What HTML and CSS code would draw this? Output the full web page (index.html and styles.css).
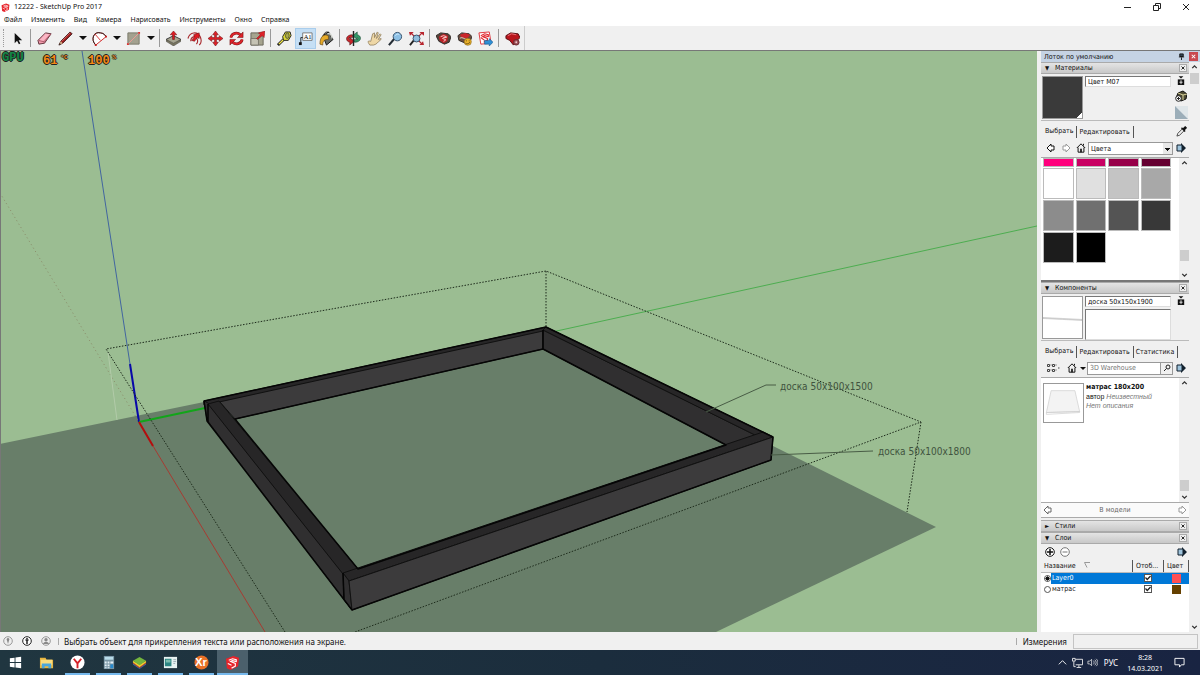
FILE: index.html
```
<!DOCTYPE html>
<html lang="ru">

<head>
  <meta charset="UTF-8">
  <meta name="viewport" content="width=device-width, initial-scale=1.0">
  <title>12222 - SketchUp Pro 2017</title>
  <link rel="stylesheet" href="styles.css">
</head>

<body>
  <!-- shared icons -->
  <svg class="defs" aria-hidden="true">
    <symbol id="left" viewBox="0 0 10 10"><path d="M1 5 5 1v2h3v4H5v2z" fill="#fff" stroke="currentColor"/></symbol>
    <symbol id="right" viewBox="0 0 10 10"><path d="M9 5 5 1v2H2v4h3v2z" fill="#fff" stroke="currentColor"/></symbol>
    <symbol id="home" viewBox="0 0 12 12"><path d="M1 6 6 1l5 5M2.500 5.500V11h7V5.500M9 3V1" fill="none" stroke="#111" stroke-width="1.200"/><path d="M5 7h2v4H5z" fill="#111"/></symbol>
    <symbol id="details" viewBox="0 0 10 10"><path d="M1 2h5v6H1z" fill="#9fc4dc" stroke="#12212e"/><path d="M5 0l5 5-5 5V8h1V2H5z" fill="#12212e"/></symbol>
    <symbol id="secondary" viewBox="0 0 10 12"><path d="M2 0h6L5 3z" fill="#111"/><path d="M1 4h8v7H1z" fill="#111"/><path d="M5 5v5M3 7.500h4" stroke="#fff"/></symbol>
    <symbol id="up" viewBox="0 0 8 8"><path d="M2 5 4 3l2 2" fill="none" stroke="#333" stroke-width="1.200"/></symbol>
    <symbol id="down" viewBox="0 0 8 8"><path d="m2 3 2 2 2-2" fill="none" stroke="#333" stroke-width="1.200"/></symbol>
    <symbol id="cross" viewBox="0 0 8 8"><path d="m2 2 4 4M6 2 2 6" stroke="currentColor" stroke-width="1.200"/></symbol>
    <symbol id="sketchup" viewBox="0 0 16 16"><path d="M1 4 9 1l6 2-1 9-8 4-4-2z" fill="#e8242b"/><path d="M4 5.500 8 4l4 1v2L8 6 6 7l5 2v3l-4 2M3 9l4 2" fill="none" stroke="#fff" stroke-width="1.200"/></symbol>
  </svg>

  <header class="titlebar">
    <svg class="logo"><use href="#sketchup"/></svg>
    <h1>12222 - SketchUp Pro 2017</h1>
    <div class="window-buttons">
      <button aria-label="Свернуть"><svg viewBox="0 0 10 10"><path d="M1 5.500h7" stroke="#222"/></svg></button>
      <button aria-label="Восстановить"><svg viewBox="0 0 10 10"><path d="M1.500 3.500h5v5h-5zM3.500 3V1.500h5v5H7" fill="none" stroke="#222"/></svg></button>
      <button aria-label="Закрыть"><svg viewBox="0 0 10 10"><path d="m2 2 6 6M8 2 2 8" stroke="#222"/></svg></button>
    </div>
  </header>

  <nav class="menu">
    <button>Файл</button>
    <button>Изменить</button>
    <button>Вид</button>
    <button>Камера</button>
    <button>Нарисовать</button>
    <button>Инструменты</button>
    <button>Окно</button>
    <button>Справка</button>
  </nav>

  <div class="toolbar" role="toolbar" aria-label="Инструменты">
    <span class="grip"></span>
    <button aria-label="Выбор"><svg viewBox="0 0 16 16"><path d="M5 2v11l2.500-2.500L9.500 14l1.500-.8-1.800-3.400H13z" fill="#111"/></svg></button>
    <span class="sep"></span>
    <button aria-label="Ластик"><svg viewBox="0 0 16 16"><path d="M1 10 9 2l6 1-7 10-6 1z" fill="#f29aac" stroke="#5c3038"/><path d="m1.500 10 6 1.500L15 3M7.500 11.500 8 13" fill="none" stroke="#a85868"/><path d="m9 3 4 .5-6 7-4-1z" fill="#fbb6c4"/></svg></button>
    <button aria-label="Линия"><svg viewBox="0 0 16 16"><path d="M1 15 3 11 13 1l2 2L5 13z" fill="#9f2020" stroke="#3f1515"/><path d="m1 15 2-4 2 2z" fill="#d8b48c"/><path d="M1 15l1-2 1 1z" fill="#111"/><path d="m4 11 9-9" stroke="#d76060"/></svg></button>
    <button class="caret" aria-label="Другие линии"></button>
    <button aria-label="Дуга"><svg viewBox="0 0 16 16"><path d="M4 15C-2 9 2 0 9 2c4 0 6 4 6 4z" fill="#fff" stroke="#c22"/><path d="M4 15C-2 9 2 0 9 2c4 0 6 4 6 4" fill="none" stroke="#222"/><path d="m3 3 6 7" stroke="#d33"/><path d="M3 14h2v2H3zM14 5h2v2h-2z" fill="#c22"/></svg></button>
    <button class="caret" aria-label="Другие дуги"></button>
    <button aria-label="Прямоугольник"><svg viewBox="0 0 16 16"><path d="M2 2h12v12H2z" fill="#a3a18f" stroke="#77776b"/><path d="M2 14 14 2" stroke="#f09b95"/><path d="M1 13h2v2H1zM13 1h2v2h-2z" fill="#d33"/></svg></button>
    <button class="caret" aria-label="Другие фигуры"></button>
    <span class="sep"></span>
    <button aria-label="Вдавить"><svg viewBox="0 0 16 16"><path d="m0 9 8-4 8 4-8 6z" fill="#a6a48f" stroke="#333"/><path d="m0 9 8 4 8-4v2l-8 5-8-5z" fill="#77745f" stroke="#444" stroke-width=".5"/><path d="M8 0 4.500 4H7v5h2V4h2.500z" fill="#e01a22" stroke="#6e1518" stroke-width=".6"/></svg></button>
    <button aria-label="Смещение"><svg viewBox="0 0 16 16"><path d="M1 8C3 1 11 0 14 6s-1 9-1 9M4 11c0-5 5-7 7-2 1 3-1 5-1 5" fill="none" stroke="#a92c30" stroke-width="1.200"/><path d="m5 10 3-4-1-2 6-2v6l-2-1-3 4z" fill="#e01a22" stroke="#6e1518" stroke-width=".6"/></svg></button>
    <button aria-label="Переместить"><svg viewBox="0 0 16 16"><path d="m8 0 3 4H9v3h3V5l4 3-4 3V9H9v3h2l-3 4-3-4h2V9H4v2L0 8l4-3v2h3V4H5z" fill="#df2027" stroke="#6e1518" stroke-width=".6"/></svg></button>
    <button aria-label="Повернуть"><svg viewBox="0 0 16 16"><path d="M2 7c1-5 7-6 10-3M14 9c-1 5-7 6-10 3" fill="none" stroke="#7c181b" stroke-width="3"/><path d="M2 7c1-5 7-6 10-3M14 9c-1 5-7 6-10 3" fill="none" stroke="#e0252b" stroke-width="2"/><path d="M15 1v6H9zM1 15V9h6z" fill="#df2027" stroke="#6e1518" stroke-width=".6"/></svg></button>
    <button aria-label="Масштаб"><svg viewBox="0 0 16 16"><path d="M1 2h13v13H1z" fill="#a6a48f" stroke="#66645a"/><path d="M1 8h8v7H1z" fill="#c5c3b4" stroke="#77756a"/><path d="m8 9-1-1 4-4-2-2 7-2-1 7-2-2z" fill="#df2027" stroke="#8c1d20" stroke-width=".6"/></svg></button>
    <span class="sep"></span>
    <button aria-label="Рулетка"><svg viewBox="0 0 16 16"><path d="M1 15 7 9" stroke="#222" stroke-width="3"/><path d="M2 14 7 9" stroke="#f5e94a" stroke-width="1.500"/><path d="M6 6 9 1h5l1 4-3 5H7z" fill="#dcd836" stroke="#222"/><ellipse cx="11" cy="5" rx="2" ry="3" fill="#a8a94c" stroke="#222" stroke-width=".6"/></svg></button>
    <button class="active" aria-label="Текст"><svg viewBox="0 0 16 16"><path d="M5 2h10v8H5z" fill="#fff" stroke="#777"/><path d="M5 7H3v6" fill="none" stroke="#222"/><path d="M1 12h3v3H1z" fill="#111"/><text x="6" y="9" class="tool-letters">A1</text></svg></button>
    <button aria-label="Заливка"><svg viewBox="0 0 16 16"><path d="m4 5 6-4 5 8-7 6z" fill="#676b66" stroke="#111"/><path d="M5 4c2-5 7-3 8 2" fill="none" stroke="#222"/><path d="M9 3c3-1 5 2 5 5" stroke="#d5d8d2" fill="none" stroke-width="1.500"/><path d="M10 5C6 3 1 5 1 14l3 1c0-5 2-6 6-6z" fill="#e6aa28" stroke="#654817" stroke-width=".7"/></svg></button>
    <span class="sep"></span>
    <button aria-label="Орбита"><svg viewBox="0 0 16 16"><path d="M7 4C-1 4-1 11 4 12v3l5-4-5-4v2C2 8 3 7 7 7z" fill="#c8262b" stroke="#4b1719" stroke-width=".6"/><path d="M9 12c8 0 8-7 3-8V1L7 5l5 4V7c2 1 1 2-3 2z" fill="#34996a" stroke="#16452f" stroke-width=".6"/><path d="M8 0v16" stroke="#222" stroke-width="1.500"/></svg></button>
    <button aria-label="Панорама"><svg viewBox="0 0 16 16"><path d="M3 15c-3-4-2-5 1-4l2-8 2-1v5l3-6 1 1-2 6 4-5 1 1-3 5 3-1v1c-4 3-4 5-8 6z" fill="#eed7a6" stroke="#8b7958" stroke-width=".8"/></svg></button>
    <button aria-label="Лупа"><svg viewBox="0 0 16 16"><path d="m1 15 6-7" stroke="#252d35" stroke-width="2.200"/><circle cx="10" cy="6" r="4.500" fill="#8cc0e5" stroke="#314d67"/><path d="M8 5c1-2 3-2 4-1" stroke="#d8efff" fill="none"/></svg></button>
    <button aria-label="В размер окна"><svg viewBox="0 0 16 16"><path d="M1 15 6 9" stroke="#222" stroke-width="2"/><path d="m2 2 4 4m8-4-4 4m4 8-4-4" stroke="#b32530" stroke-width="1.500"/><path d="M0 1h5L1 5zM16 1v4l-5-4zM16 15h-5l4-4z" fill="#b8262f"/><circle cx="8" cy="8" r="3.700" fill="#91bede" stroke="#344e65"/></svg></button>
    <span class="sep"></span>
    <button aria-label="3D Warehouse"><svg viewBox="0 0 16 16"><path d="m0 5 5-3 8 1 3 3-2 6-5 2-6-3z" fill="#554238" stroke="#302b29"/><path d="m3 6 5-3 5 2-1 6-4 2-4-3z" fill="#bd2228"/><path d="m5 6 3-1 3 1v1L8 7 7 8l3 1v1l-2 1" fill="none" stroke="#f6d7d2"/></svg></button>
    <button aria-label="Поделиться моделью"><svg viewBox="0 0 16 16"><path d="m1 5 4-3 8 1 3 3-2 5-5 2-7-3z" fill="#6b4b3d" stroke="#302b29"/><path d="m3 4 6-2 5 2-3 4-6-1z" fill="#c9272b"/><path d="M3 8c2-2 4 0 7 1" stroke="#eee1d2" fill="none"/><circle cx="11.500" cy="11.500" r="3.800" fill="#edb42a" stroke="#815f13" stroke-width=".6"/><path d="M10 10v1m3-1v1m-4 2c1 1 3 1 5-1" stroke="#684b10" fill="none"/></svg></button>
    <button aria-label="LayOut"><svg viewBox="0 0 16 16"><path d="m1 2 11-1 2 12-11 1z" fill="#fff" stroke="#df3037"/><path d="m3 5 4-2 4 1v2L7 5 5 6l5 2v2l-4 2M3 7l4 3" fill="none" stroke="#e1272e" stroke-width="1.200"/><path d="M7 10h5V8l4 4-4 4v-2H7z" fill="#2e8fd5" stroke="#115286" stroke-width=".6"/></svg></button>
    <span class="sep"></span>
    <button aria-label="Extension Warehouse"><svg viewBox="0 0 16 16"><path d="m1 5 5-3 8 1 2 4-4 4-3 4-4-5-4-2z" fill="#b9161d" stroke="#571013"/><path d="m3 5 4-2 5 1" stroke="#ed747a" fill="none"/><circle cx="12" cy="12" r="3" fill="#9d5158" stroke="#69292f"/><circle cx="12" cy="12" r="1" fill="#efc9cc"/></svg></button>
    <span class="toolbar-end"></span>
  </div>

  <main class="workspace">
    <section class="viewport">
      <svg class="scene" viewBox="1 51 1036 581" preserveAspectRatio="xMinYMin slice">
        <path class="ground-shadow" d="M0 444 204 402 546 335 773 446 936 527 716 632H0z"/>

        <!-- axes -->
        <path class="axis blue" d="m82 51 48 313"/>
        <path class="axis blue thick" d="m130 364 9 58"/>
        <path class="axis green" d="m552 332 485-106"/>
        <path class="axis green thick" d="m139 422 66-14"/>
        <path class="axis red" d="m153 446 112 186"/>
        <path class="axis red thick" d="m139 422 14 24"/>
        <path class="axis back" d="m0 193 139 229"/>
        <path class="axis guide" d="m108 352 9 68"/>

        <!-- bounding box -->
        <path class="bounds" d="M285 632 106 349l440-78 375 151-566 210M546 271v56M921 422l-14 90"/>

        <!-- wooden frame -->
        <g class="frame">
          <path class="face-mid" d="m219 401 324-71v19L235 419z"/>
          <path class="face-top" d="m204 401 342-74-3 4-324 71-15 3z"/>
          <path class="face-side" d="m543 330 214 106-31 9-183-96z"/>
          <path class="face-top" d="m543 330 3-3 227 110-16-1z"/>
          <path class="face-side" d="m204 401 4 2 135 170 9 37-145-190z"/>
          <path class="face-top" d="m208 404 11-3 139 168-15 5z"/>
          <path class="face-top" d="m343 573 420-141 10 5-424 144z"/>
          <path class="face-side" d="m343 573 6 8 3 29-8-10z"/>
          <path class="face-mid" d="m349 581 424-144-2 23-419 150z"/>
          <path class="outline" d="m204 401 342-74 227 110-2 23-419 150-145-189zM235 419l308-70 183 96-368 124zM543 330v19M208 404v18M343 573l1 27"/>
        </g>

        <path class="leader" d="m706 412 60-27h10M771 455l102-4"/>
        <text class="note" x="780" y="390">доска 50x100x1500</text>
        <text class="note" x="878" y="455">доска 50x100x1800</text>
      </svg>
      <div class="gpu-overlay">
        <span class="gpu-name">GPU</span>
        <span class="gpu-temp">61<sup>°C</sup></span>
        <span class="gpu-load">100<sup>%</sup></span>
      </div>
    </section>

    <aside class="tray">
      <div class="tray-title">
        <span>Лоток по умолчанию</span>
        <button class="pin" aria-label="Закрепить"><svg viewBox="0 0 8 8"><path d="M2 1h4v3H2zM1 4.500h6M4 5v3" fill="#345" stroke="#111"/></svg></button>
        <button class="tray-close" aria-label="Закрыть"><svg><use href="#cross"/></svg></button>
      </div>
      <div class="tray-body">
        <div class="panels">
          <section class="panel">
            <h2 class="panel-head"><span class="tri">▼</span>Материалы<button aria-label="Закрыть"><svg><use href="#cross"/></svg></button></h2>
            <div class="preview">
              <div class="thumb material-thumb"></div>
              <input type="text" value="Цвет M07" aria-label="Название материала">
              <div class="side-icons">
                <svg class="icon-s"><use href="#secondary"/></svg>
                <svg class="icon-m" viewBox="0 0 12 12"><path d="m3 3 5-2 4 3-1 5-5 2-5-3z" fill="#4d4a32" stroke="#111"/><path d="m3 3 5 2 4-1M8 5v5" stroke="#d9d39c" fill="none"/><circle cx="3.500" cy="8.500" r="2.800" fill="#fff" stroke="#222"/><path d="M3.500 7v3M2 8.500h3" stroke="#222"/></svg>
                <svg class="icon-l" viewBox="0 0 14 14"><path d="M0 0h14v14z" fill="#dfe6e9"/><path d="M0 0v14h14z" fill="#9caeb9"/></svg>
              </div>
            </div>
            <div class="tabs">
              <button class="selected">Выбрать</button>
              <button>Редактировать</button>
              <svg class="dropper" viewBox="0 0 12 12"><path d="m1 11 1-3 5-5 2 2-5 5z" fill="#eee" stroke="#444"/><path d="m6 2 4 4M8 3l2-2 1 1-2 2" stroke="#111" stroke-width="1.500"/></svg>
            </div>
            <div class="browse">
              <button aria-label="Назад"><svg><use href="#left"/></svg></button>
              <button class="dim" aria-label="Вперед"><svg><use href="#right"/></svg></button>
              <button aria-label="В модели"><svg><use href="#home"/></svg></button>
              <select aria-label="Коллекция"><option>Цвета</option></select>
              <button class="more" aria-label="Подробности"><svg><use href="#details"/></svg></button>
            </div>
            <div class="list swatch-list">
              <div class="swatches">
                <button class="swatch pink1" aria-label="Цвет L04"></button>
                <button class="swatch pink2" aria-label="Цвет L05"></button>
                <button class="swatch pink3" aria-label="Цвет L06"></button>
                <button class="swatch pink4" aria-label="Цвет L07"></button>
                <button class="swatch gray0" aria-label="Цвет M00"></button>
                <button class="swatch gray1" aria-label="Цвет M01"></button>
                <button class="swatch gray2" aria-label="Цвет M02"></button>
                <button class="swatch gray3" aria-label="Цвет M03"></button>
                <button class="swatch gray4" aria-label="Цвет M04"></button>
                <button class="swatch gray5" aria-label="Цвет M05"></button>
                <button class="swatch gray6" aria-label="Цвет M06"></button>
                <button class="swatch gray7" aria-label="Цвет M07"></button>
                <button class="swatch gray8" aria-label="Цвет M08"></button>
                <button class="swatch gray9" aria-label="Цвет M09"></button>
              </div>
              <div class="scrollbar at-end"><svg><use href="#up"/></svg><i></i><svg><use href="#down"/></svg></div>
            </div>
          </section>

          <section class="panel">
            <h2 class="panel-head"><span class="tri">▼</span>Компоненты<button aria-label="Закрыть"><svg><use href="#cross"/></svg></button></h2>
            <div class="preview">
              <div class="thumb"><svg viewBox="0 0 40 40"><path d="m0 20 20 1 20 1v1l-20-1-20-1z" fill="#ddd" stroke="#bbb" stroke-width=".6"/></svg></div>
              <div class="fields">
                <input type="text" value="доска 50x150x1900" aria-label="Название компонента">
                <textarea aria-label="Описание"></textarea>
              </div>
              <div class="side-icons"><svg class="icon-s"><use href="#secondary"/></svg></div>
            </div>
            <div class="tabs">
              <button class="selected">Выбрать</button>
              <button>Редактировать</button>
              <button>Статистика</button>
            </div>
            <div class="browse">
              <button class="views" aria-label="Вид"><svg viewBox="0 0 14 10"><path d="M1.500 1.500h2v2h-2zM6.500 1.500h2v2h-2zM1.500 6.500h2v2h-2zM6.500 6.500h2v2h-2z" fill="none" stroke="#444"/><path d="M4.500 2h1M9.500 2h1M4.500 7h1M9.500 7h1M12 5h1.500" stroke="#444"/></svg></button>
              <button aria-label="В модели"><svg><use href="#home"/></svg></button>
              <button class="caret small" aria-label="Коллекции"></button>
              <input type="text" placeholder="3D Warehouse" aria-label="Поиск 3D Warehouse">
              <button class="search" aria-label="Найти"><svg viewBox="0 0 10 10"><circle cx="6" cy="4" r="2" fill="none" stroke="#222"/><path d="M4.500 5.500 2 8" stroke="#222"/></svg></button>
              <button class="more" aria-label="Подробности"><svg><use href="#details"/></svg></button>
            </div>
            <div class="list component-list">
              <div class="component">
                <div class="thumb"><svg viewBox="0 0 40 40"><path d="M7 7h25l5 22-35 1z" fill="#f3f3f3" stroke="#ccc" stroke-width=".7"/><path d="m2 30 35-1v1L2 32z" fill="none" stroke="#ccc" stroke-width=".7"/></svg></div>
                <div class="component-text">
                  <strong>матрас 180x200</strong>
                  <span>автор <em>Неизвестный</em></span>
                  <em>Нет описания</em>
                </div>
              </div>
              <div class="scrollbar at-end"><svg><use href="#up"/></svg><i></i><svg><use href="#down"/></svg></div>
            </div>
            <div class="pager">
              <button aria-label="Назад"><svg><use href="#left"/></svg></button>
              <span>В модели</span>
              <button class="dim" aria-label="Вперед"><svg><use href="#right"/></svg></button>
            </div>
          </section>

          <section class="panel">
            <h2 class="panel-head"><span class="tri">►</span>Стили<button aria-label="Закрыть"><svg><use href="#cross"/></svg></button></h2>
          </section>

          <section class="panel layers">
            <h2 class="panel-head"><span class="tri">▼</span>Слои<button aria-label="Закрыть"><svg><use href="#cross"/></svg></button></h2>
            <div class="layer-tools">
              <button aria-label="Добавить слой"><svg viewBox="0 0 10 10"><circle cx="5" cy="5" r="4.300" fill="#fff" stroke="#111"/><path d="M5 2v6M2 5h6" stroke="#111" stroke-width="1.500"/></svg></button>
              <button aria-label="Удалить слой"><svg viewBox="0 0 10 10"><circle cx="5" cy="5" r="4.300" fill="#fff" stroke="#777"/><path d="M2.500 5h5" stroke="#777"/></svg></button>
              <button class="more" aria-label="Подробности"><svg><use href="#details"/></svg></button>
            </div>
            <table>
              <thead>
                <tr>
                  <th>Название <svg class="sort" viewBox="0 0 6 6"><path d="M6 .5H.5L3 5.500" fill="none" stroke="#999"/></svg></th>
                  <th class="col-visible">Отоб...</th>
                  <th class="col-color">Цвет</th>
                </tr>
              </thead>
              <tbody>
                <tr class="current">
                  <td><label><input type="radio" name="layer" checked><span>Layer0</span></label></td>
                  <td><input type="checkbox" aria-label="Показать Layer0" checked></td>
                  <td><span class="chip coral"></span></td>
                </tr>
                <tr>
                  <td><label><input type="radio" name="layer"><span>матрас</span></label></td>
                  <td><input type="checkbox" aria-label="Показать матрас" checked></td>
                  <td><span class="chip brown"></span></td>
                </tr>
              </tbody>
            </table>
          </section>
        </div>
        <div class="scrollbar"><svg><use href="#up"/></svg><i></i><svg><use href="#down"/></svg></div>
      </div>
    </aside>
  </main>

  <footer class="statusbar">
    <svg viewBox="0 0 10 10"><circle cx="5" cy="5" r="4.300" fill="#eee" stroke="#999"/><path d="M5 2a1.500 1.500 0 0 1 1 2.500L5 8 4 4.500A1.500 1.500 0 0 1 5 2z" fill="#888"/></svg>
    <svg viewBox="0 0 10 10"><circle cx="5" cy="5" r="4.300" fill="#fff" stroke="#222"/><path d="M5 2v1M3.500 4h3M5 4v4" stroke="#222" stroke-width="1.500"/></svg>
    <svg viewBox="0 0 10 10"><circle cx="5" cy="5" r="4.300" fill="#eee" stroke="#999"/><circle cx="5" cy="3.800" r="1.700" fill="#888"/><path d="M2 8c1-3 5-3 6 0z" fill="#888"/></svg>
    <span class="hint">Выбрать объект для прикрепления текста или расположения на экране.</span>
    <label for="measure">Измерения</label>
    <input type="text" id="measure">
  </footer>

  <div class="taskbar">
    <button aria-label="Пуск"><svg viewBox="0 0 16 16"><path d="m2 3.500 5-.7v4.700H2zm6-.8 6-.9v5.700H8zM2 8.500h5v4.700l-5-.7zm6 0h6v5.700l-6-.9z" fill="#fff"/></svg></button>
    <button aria-label="Проводник"><svg viewBox="0 0 16 16"><path d="M1 3h6l1 2h7v9H1z" fill="#e8b63f"/><path d="M2 5h12v6H2z" fill="#f8dc80"/><path d="M3 9h10v5h-3v-2H6v2H3z" fill="#4aa6dc"/></svg></button>
    <button class="open" aria-label="Яндекс Браузер"><svg viewBox="0 0 16 16"><circle cx="8" cy="8" r="7.500" fill="#fff"/><path d="m4 4 4 5 4-5M8 8v6" fill="none" stroke="#d42128" stroke-width="2"/></svg></button>
    <button class="open" aria-label="Калькулятор"><svg viewBox="0 0 16 16"><path d="M3 1h11v14H3z" fill="#7895a4"/><path d="M4 2h9v3H4z" fill="#b9dcea"/><path d="M4 7h2v2H4zm3 0h2v2H7zm3 0h3v2h-3zM4 10h2v2H4zm3 0h2v2H7zM4 13h2v1H4zm3 0h2v1H7z" fill="#e6f1f7"/><path d="M10 10h3v4h-3z" fill="#2789cc"/></svg></button>
    <button class="open" aria-label="BlueStacks"><svg viewBox="0 0 16 16"><path d="m1 9 7 5 7-5v1l-7 5-7-5z" fill="#2b77bd"/><path d="m1 8 7 5 7-5v1l-7 5-7-5z" fill="#d9382c"/><path d="m1 6 7 4 7-4v2l-7 5-7-5z" fill="#f3ca2e"/><path d="m1 6 7-4 7 4-7 5z" fill="#74b53d"/></svg></button>
    <button class="open" aria-label="Приложение"><svg viewBox="0 0 16 16"><path d="M1 2h14v12H1z" fill="#e7f2f2"/><path d="M2 4h7v8H2z" fill="#2b8583"/><path d="M3 5h5v3H3z" fill="#7dbcae"/><path d="M11 5h3M11 7h3M11 9h2" stroke="#9aabb2"/></svg></button>
    <button class="open" aria-label="Xr"><svg viewBox="0 0 16 16"><circle cx="8" cy="8" r="7.500" fill="#e97127"/><text x="1" y="12" class="xr">Xr</text></svg></button>
    <button class="open current" aria-label="SketchUp"><svg><use href="#sketchup"/></svg></button>
    <div class="system">
      <svg viewBox="0 0 12 12"><path d="m2 8 4-4 4 4" fill="none" stroke="#fff"/></svg>
      <svg viewBox="0 0 12 12"><path d="M4 2.500h7.500v6H4M7.500 9v2M5 11.500h5M.5 1.500h3v3h-3zM2 5v5.500h2" fill="none" stroke="#eee"/></svg>
      <svg viewBox="0 0 12 12"><path d="M1 4.500h2l2-2v7l-2-2H1zM7 4c1 1 1 3 0 4M8.500 3c2 2 2 4 0 6M10 2c2.500 2.500 2.500 5.500 0 8" fill="none" stroke="#eee" stroke-width=".8"/></svg>
      <span class="lang">РУС</span>
      <time datetime="2021-03-14T08:28">8:28<br>14.03.2021</time>
      <svg viewBox="0 0 12 12"><path d="M1 1.500h10v7H8L6 11V8.500H1z" fill="none" stroke="#fff"/></svg>
    </div>
  </div>
</body>

</html>
```
FILE: styles.css
```
* {
  box-sizing: border-box;
}

body {
  margin: 0;
  height: 100vh;
  display: flex;
  flex-direction: column;
  overflow: hidden;
  background: #f0f0f0;
  color: #111;
  font-family: "Noto Sans", sans-serif;
  font-size: 8px;
  line-height: 12px;
}

button,
input,
select,
textarea {
  margin: 0;
  padding: 0;
  border: 0;
  border-radius: 0;
  background: none;
  color: inherit;
  font: inherit;
}

button {
  display: flex;
  align-items: center;
  justify-content: center;
}

svg {
  display: block;
  flex: none;
}

.defs {
  display: none;
}

/* title and menu */
.titlebar {
  display: flex;
  align-items: center;
  gap: 4px;
  height: 14px;
  padding-left: 1px;
  background: #fff;
}

.logo {
  width: 9px;
  height: 9px;
}

h1 {
  margin: 0;
  font-size: 7px;
  font-weight: normal;
}

.window-buttons {
  display: flex;
  margin-left: auto;
}

.window-buttons button {
  width: 29px;
  height: 14px;
}

.window-buttons svg {
  width: 10px;
  height: 10px;
}

.menu {
  display: flex;
  gap: 9px;
  height: 12px;
  padding-left: 4px;
  background: #fff;
  font-size: 7px;
}

/* toolbar */
.toolbar {
  display: flex;
  align-items: center;
  height: 25px;
  padding-left: 3px;
  border-bottom: 1px solid #777;
  background: #f0f0f0;
}

.toolbar button {
  width: 21px;
  height: 21px;
}

.toolbar button.active {
  border: 1px solid #a9cdec;
  background: #c5dff5;
}

.toolbar svg {
  width: 15px;
  height: 15px;
}

.grip {
  width: 4px;
  height: 18px;
  border-left: 1px dotted #999;
}

.sep {
  width: 1px;
  height: 18px;
  margin: 0 3px 0 2px;
  background: #999;
}

.toolbar-end {
  width: 1px;
  height: 24px;
  margin-left: 1px;
  background: #ccc;
}

.toolbar .caret {
  width: 13px;
}

.caret::before {
  content: "";
  border: 4px solid transparent;
  border-top-color: #111;
  border-bottom: 0;
}

.tool-letters {
  font-family: "Liberation Serif", serif;
  font-size: 7px;
}

/* model viewport */
.workspace {
  flex: 1;
  display: flex;
  min-height: 0;
}

.viewport {
  flex: 1;
  position: relative;
  min-width: 0;
  border-left: 1px solid #777;
  background: #9bbd92;
}

.scene {
  width: 100%;
  height: 100%;
}

.ground-shadow {
  fill: #687e69;
}

.axis {
  fill: none;
  stroke-width: 1;
}

.blue {
  stroke: #4265a0;
}

.green {
  stroke: #4dad50;
}

.red {
  stroke: #a73b32;
}

.thick {
  stroke-width: 2;
}

.blue.thick {
  stroke: #0808a8;
}

.green.thick {
  stroke: #12a51a;
}

.red.thick {
  stroke: #b50d0d;
}

.back {
  stroke: #8a8a68;
  stroke-dasharray: 1 3;
}

.guide {
  stroke: #b2cba9;
}

.bounds {
  fill: none;
  stroke: #1d2b1b;
  stroke-dasharray: 1.5 1.5;
}

.frame {
  stroke: #111;
  stroke-linejoin: round;
}

.face-top {
  fill: #272627;
}

.face-mid {
  fill: #3c3b3c;
}

.face-side {
  fill: #302f30;
}

.outline {
  fill: none;
  stroke: #050505;
  stroke-width: 1.5;
}

.leader {
  fill: none;
  stroke: #485c45;
}

.note {
  fill: #40533e;
  font-family: "DejaVu Sans Condensed", "DejaVu Sans", sans-serif;
  font-size: 10px;
}

.gpu-overlay {
  position: absolute;
  top: 0;
  left: 1px;
  display: flex;
  color: #f58a14;
  font-family: "Liberation Mono", monospace;
  font-size: 12px;
  font-weight: bold;
  line-height: 14px;
  text-shadow: 1px 0 #222, -1px 0 #222, 0 1px #222, 0 -1px #222;
}

.gpu-overlay sup {
  margin-left: 3px;
  font-size: 6px;
}

.gpu-name {
  width: 41px;
  color: #128846;
}

.gpu-temp {
  width: 45px;
}

/* tray */
.tray {
  display: flex;
  flex-direction: column;
  width: 163px;
  flex: none;
  padding-left: 4px;
  background: #f0f0f0;
  font-family: "DejaVu Sans Condensed", "DejaVu Sans", sans-serif;
  font-size: 7px;
}

.tray-title {
  display: flex;
  align-items: center;
  height: 11px;
  padding-left: 3px;
  background: #c5d3e4;
}

.pin {
  margin-left: auto;
  width: 11px;
}

.tray-close {
  width: 9px;
  height: 9px;
  margin: 0 2px;
  background: #c94a50;
  color: #fff;
}

.tray-title svg {
  width: 7px;
  height: 7px;
}

.tray-body {
  flex: 1;
  display: flex;
  min-height: 0;
}

.panels {
  flex: 1;
  display: flex;
  flex-direction: column;
  min-width: 0;
}

.panel-head {
  display: flex;
  align-items: center;
  height: 12px;
  margin: 0;
  padding: 0 2px 0 4px;
  border: 1px solid #aaa;
  border-width: 1px 0;
  background: linear-gradient(#e4e4e4, #c8c8c8);
  font-size: 7px;
  font-weight: normal;
}

.tri {
  width: 10px;
  font-size: 6px;
}

.panel-head button {
  width: 8px;
  height: 8px;
  margin-left: auto;
  border: 1px solid #aaa;
  background: #eee;
}

.panel-head svg {
  width: 6px;
  height: 6px;
}

.preview {
  display: flex;
  gap: 2px;
  height: 47px;
  padding: 2px 0 0 1px;
  border-bottom: 1px solid #bbb;
}

.thumb {
  width: 41px;
  height: 43px;
  flex: none;
  border: 1px solid #999;
  background: #fff;
}

.thumb svg {
  width: 100%;
  height: 100%;
}

.material-thumb {
  background: linear-gradient(135deg, transparent 93%, #fff 93%), #3a3a3a;
}

.preview input,
.preview textarea {
  width: 100%;
  height: 11px;
  padding: 0 2px;
  border: 1px solid #777;
  border-right-color: #ddd;
  border-bottom-color: #ddd;
  background: #fff;
}

.fields,
.preview > input {
  flex: 1;
  min-width: 0;
}

.fields {
  display: flex;
  flex-direction: column;
  gap: 2px;
}

.preview textarea {
  flex: 1;
  resize: none;
}

.side-icons {
  display: flex;
  flex-direction: column;
  align-items: center;
  gap: 4px;
  width: 16px;
}

.icon-s {
  width: 8px;
  height: 10px;
}

.icon-m {
  width: 12px;
  height: 12px;
}

.icon-l {
  width: 13px;
  height: 13px;
}

.tabs {
  display: flex;
  align-items: center;
  height: 18px;
  padding: 3px 2px 0 2px;
}

.tabs button {
  height: 12px;
  padding: 0 3px 0 2px;
  border-right: 1px solid #555;
}

.tabs .selected {
  padding-bottom: 2px;
}

.dropper {
  width: 11px;
  height: 11px;
  margin-left: auto;
}

.browse {
  display: flex;
  align-items: center;
  height: 18px;
  padding: 0 0 0 2px;
}

.browse button {
  width: 15px;
  height: 14px;
}

.browse svg,
.pager svg,
.layer-tools svg {
  width: 10px;
  height: 10px;
}

.browse .views {
  width: 20px;
  margin-right: 1px;
}

.browse .views svg {
  width: 14px;
}

.browse .small {
  width: 8px;
}

.small::before {
  border-width: 3px 3px 0;
}

.browse select,
.browse input {
  flex: 1;
  min-width: 0;
  height: 13px;
  padding: 0 2px;
  border: 1px solid #999;
  background: #fff;
}

.browse select {
  appearance: none;
  background: linear-gradient(to right, #111, #111) right 2px top 5px / 5px 1px no-repeat,
    linear-gradient(to right, #111, #111) right 3px top 6px / 3px 1px no-repeat,
    linear-gradient(to right, #111, #111) right 4px top 7px / 1px 1px no-repeat,
    linear-gradient(to right, #e8e8e8, #e8e8e8) right / 9px 100% no-repeat, #fff;
}

.browse input::placeholder {
  color: #777;
}

.browse .search {
  width: 12px;
  height: 13px;
  border: 1px solid #999;
  border-left: 0;
}

.browse .more {
  width: 16px;
}

.dim {
  color: #999;
}

.list {
  display: flex;
  border: 1px solid #aaa;
  border-width: 1px 0;
  background: #fff;
}

.swatch-list {
  height: 125px;
  border-bottom: 2px solid #777;
}

.swatches {
  flex: 1;
  display: grid;
  grid-template-columns: repeat(4, 1fr);
  grid-template-rows: 9px 31px 31px 31px;
  gap: 2px;
  row-gap: 1px;
  padding: 0 8px 0 2px;
  align-content: start;
}

.swatch {
  border: 1px solid #bbb;
}

.pink1 { background: #ff007d; }
.pink2 { background: #c90063; }
.pink3 { background: #970049; }
.pink4 { background: #650031; }
.gray0 { background: #fff; }
.gray1 { background: #e0e0e0; }
.gray2 { background: #c4c4c4; }
.gray3 { background: #a8a8a8; }
.gray4 { background: #8c8c8c; }
.gray5 { background: #707070; }
.gray6 { background: #545454; }
.gray7 { background: #383838; }
.gray8 { background: #1c1c1c; }
.gray9 { background: #000; }

.scrollbar {
  display: flex;
  flex-direction: column;
  align-items: center;
  gap: 1px;
  width: 10px;
  flex: none;
  background: #f0f0f0;
}

.tray-body > .scrollbar {
  width: 11px;
}

.tray-body > .scrollbar svg:last-child {
  margin-top: auto;
}

.scrollbar svg {
  width: 9px;
  height: 10px;
}

.scrollbar i {
  width: 9px;
  height: 11px;
  background: #cdcdcd;
}

.at-end i {
  margin-top: auto;
}

.swatch-list .scrollbar i {
  margin-bottom: 8px;
}

.component-list {
  height: 126px;
}

.component {
  flex: 1;
  display: flex;
  gap: 2px;
  padding: 5px 0 0 2px;
}

.component .thumb {
  height: 40px;
}

.component-text {
  display: flex;
  flex-direction: column;
  line-height: 9px;
}

.component-text em {
  color: #777;
}

/* the author and description lines use a plainer face */
.component-text span,
.component-text em {
  font-family: "Liberation Sans", sans-serif;
}

.pager {
  display: flex;
  align-items: center;
  justify-content: space-between;
  height: 15px;
  margin-bottom: 2px;
  padding: 0 2px;
  border-bottom: 1px solid #aaa;
  background: #fafafa;
  color: #666;
}

.layers {
  flex: 1;
  background: #fff;
}

.layer-tools {
  display: flex;
  align-items: center;
  gap: 5px;
  height: 16px;
  padding: 0 2px 0 4px;
  background: #f0f0f0;
}

.layer-tools .more {
  margin-left: auto;
}

table {
  width: 100%;
  border-collapse: collapse;
  table-layout: fixed;
}

th {
  height: 12px;
  padding: 0 3px;
  border-right: 1px solid #555;
  border-bottom: 1px solid #bbb;
  background: #f0f0f0;
  font-weight: normal;
  text-align: left;
  line-height: 10px;
  white-space: nowrap;
}

.col-visible {
  width: 31px;
}

.col-color {
  width: 25px;
}

.sort {
  display: inline-block;
  width: 6px;
  height: 6px;
  margin-left: 6px;
}

td {
  height: 11px;
  padding: 0;
  line-height: 11px;
  text-align: center;
}

td label {
  display: flex;
  align-items: center;
  gap: 1px;
  height: 11px;
  padding-left: 3px;
}

td input {
  appearance: none;
  display: block;
  width: 7px;
  height: 7px;
  border: 1px solid #555;
  background: #fff;
}

input[type="radio"] {
  border-radius: 50%;
}

input[type="radio"]:checked {
  background: radial-gradient(#111 55%, #fff 60%);
}

input[type="checkbox"] {
  width: 8px;
  height: 8px;
  margin: 0 auto;
}

input[type="checkbox"]:checked::before {
  content: "";
  display: block;
  height: 6px;
  background: #222;
  clip-path: polygon(0 50%, 15% 35%, 38% 60%, 85% 8%, 100% 25%, 38% 92%);
}

.current td {
  background: #0078d7;
  color: #fff;
}

.current td:first-child {
  background: linear-gradient(to right, #fff 10px, #0078d7 10px);
}

.chip {
  display: block;
  width: 9px;
  height: 9px;
  margin: 0 auto;
}

.coral {
  background: #ff5054;
}

.brown {
  background: #654000;
}

/* status bar */
.statusbar {
  display: flex;
  align-items: center;
  height: 18px;
  padding: 0 2px 0 3px;
  background: #f0f0f0;
}

.statusbar svg {
  width: 10px;
  height: 10px;
  margin-right: 9px;
}

.statusbar .hint {
  margin-left: -2px;
  padding-left: 5px;
  border-left: 1px solid #aaa;
  line-height: 7px;
}

.statusbar label {
  margin-left: auto;
  padding: 0 6px;
  border-left: 1px solid #aaa;
  line-height: 7px;
}

.statusbar input {
  width: 125px;
  height: 15px;
  border: 1px solid #c4c4c4;
}

/* taskbar */
.taskbar {
  display: flex;
  height: 25px;
  background: linear-gradient(to right, #203640, #1b2d3d 50%, #192442);
  color: #fff;
}

.taskbar button {
  width: 31px;
  height: 25px;
}

.taskbar button svg {
  width: 15px;
  height: 15px;
}

.taskbar .open {
  background: linear-gradient(#76b9ed, #76b9ed) center bottom / 25px 2px no-repeat;
}

.taskbar .open.current {
  background: linear-gradient(#76b9ed, #76b9ed) center bottom / 31px 2px no-repeat, #4b606c;
}

.xr {
  fill: #fff;
  font-family: "Liberation Sans", sans-serif;
  font-size: 12px;
  font-weight: bold;
}

.system {
  display: flex;
  align-items: center;
  gap: 4px;
  margin-left: auto;
  padding-right: 15px;
}

.system svg {
  width: 11px;
  height: 11px;
}

.lang {
  margin-left: 2px;
}

time {
  margin: 0 7px 0 5px;
  font-size: 7px;
  line-height: 11px;
  text-align: center;
}
```
